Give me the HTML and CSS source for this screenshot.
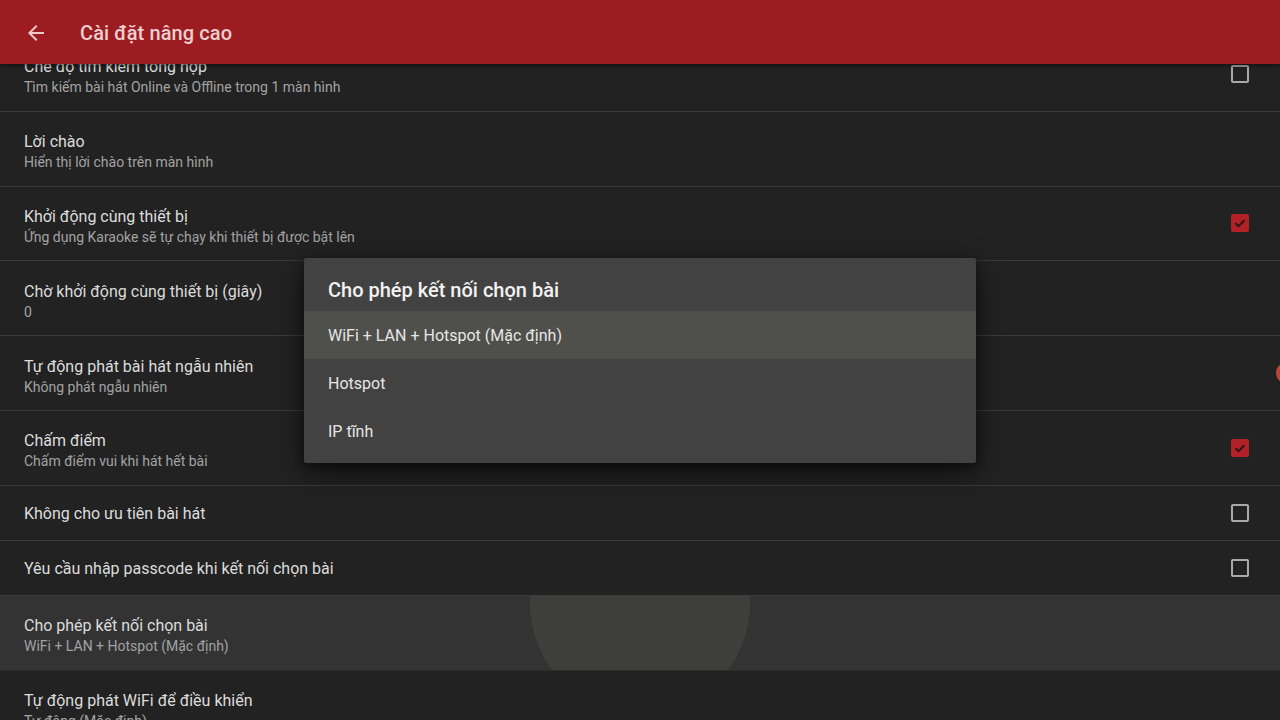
FILE: index.html
```html
<!DOCTYPE html>
<html lang="vi">
<head>
<meta charset="utf-8">
<title>Cài đặt nâng cao</title>
<link rel="stylesheet" href="styles.css">
</head>
<body>
<div class="screen">
  <header class="appbar">
    <svg class="back" viewBox="0 0 24 24" width="24" height="24"><path d="M20 11H7.83l5.59-5.59L12 4l-8 8 8 8 1.41-1.41L7.83 13H20v-2z" fill="currentColor"/></svg>
    <h1 class="appbar-title">Cài đặt nâng cao</h1>
  </header>
  <main class="content">
    <ul class="prefs">
      <li class="pref">
        <div class="pref-text"><div class="pref-title">Chế độ tìm kiếm tổng hợp</div><div class="pref-sub">Tìm kiếm bài hát Online và Offline trong 1 màn hình</div></div>
        <span class="cb"></span>
      </li>
      <li class="pref">
        <div class="pref-text"><div class="pref-title">Lời chào</div><div class="pref-sub">Hiển thị lời chào trên màn hình</div></div>
      </li>
      <li class="pref">
        <div class="pref-text"><div class="pref-title">Khởi động cùng thiết bị</div><div class="pref-sub">Ứng dụng Karaoke sẽ tự chạy khi thiết bị được bật lên</div></div>
        <span class="cb cb-on"><svg viewBox="0 0 18 18" width="18" height="18"><path d="M4.5 9.2l3 3 6-6" fill="none" stroke="#2a1618" stroke-width="2"/></svg></span>
      </li>
      <li class="pref">
        <div class="pref-text"><div class="pref-title">Chờ khởi động cùng thiết bị (giây)</div><div class="pref-sub">0</div></div>
      </li>
      <li class="pref">
        <div class="pref-text"><div class="pref-title">Tự động phát bài hát ngẫu nhiên</div><div class="pref-sub">Không phát ngẫu nhiên</div></div>
        <span class="thumb"></span>
      </li>
      <li class="pref">
        <div class="pref-text"><div class="pref-title">Chấm điểm</div><div class="pref-sub">Chấm điểm vui khi hát hết bài</div></div>
        <span class="cb cb-on"><svg viewBox="0 0 18 18" width="18" height="18"><path d="M4.5 9.2l3 3 6-6" fill="none" stroke="#2a1618" stroke-width="2"/></svg></span>
      </li>
      <li class="pref pref-single">
        <div class="pref-text"><div class="pref-title">Không cho ưu tiên bài hát</div></div>
        <span class="cb"></span>
      </li>
      <li class="pref pref-single">
        <div class="pref-text"><div class="pref-title">Yêu cầu nhập passcode khi kết nối chọn bài</div></div>
        <span class="cb"></span>
      </li>
      <li class="pref pref-focused">
        <span class="ripple"></span>
        <div class="pref-text"><div class="pref-title">Cho phép kết nối chọn bài</div><div class="pref-sub">WiFi + LAN + Hotspot (Mặc định)</div></div>
      </li>
      <li class="pref">
        <div class="pref-text"><div class="pref-title">Tự động phát WiFi để điều khiển</div><div class="pref-sub">Tự động (Mặc định)</div></div>
      </li>
    </ul>
  </main>
  <div class="dialog">
    <div class="dialog-title">Cho phép kết nối chọn bài</div>
    <ul class="options">
      <li class="option option-sel">WiFi + LAN + Hotspot (Mặc định)</li>
      <li class="option">Hotspot</li>
      <li class="option">IP tĩnh</li>
    </ul>
  </div>
</div>
</body>
</html>
```

FILE: styles.css
```css
* { box-sizing: border-box; }
html, body { margin: 0; padding: 0; }
body {
  background: #222222;
  font-family: Roboto, "Noto Sans", "Liberation Sans", sans-serif;
  width: 1280px;
  height: 720px;
  overflow: hidden;
}
.screen {
  position: relative;
  width: 1280px;
  height: 720px;
  display: flex;
  flex-direction: column;
  overflow: hidden;
}
.appbar {
  position: relative;
  z-index: 2;
  height: 64px;
  flex: none;
  background: #9d1c21;
  display: flex;
  align-items: center;
  padding-left: 24px;
  box-shadow: 0 2px 4px rgba(0,0,0,0.45);
  color: #ecc9ca;
}
.back { color: #ecc9ca; margin-top: 1px; }
.appbar-title {
  margin: 2px 0 0 32px;
  font-size: 20px;
  font-weight: 500;
  color: #ecd0d0;
  letter-spacing: 0.1px;
}
.content {
  flex: 1;
  overflow: hidden;
  position: relative;
  z-index: 1;
}
.prefs {
  list-style: none;
  margin: -27px 0 0 0;
  padding: 0;
}
.pref {
  position: relative;
  height: 74.8px;
  display: flex;
  align-items: center;
  padding: 7px 31px 0 24px;
  border-bottom: 1px solid #3a3a3a;
  overflow: hidden;
}
.pref-single { height: 55px; padding-top: 3px; }
.pref-focused { background: #333333; border-bottom-color: #2b2b2b; }
.pref-text { flex: 1; position: relative; z-index: 1; }
.pref-title {
  font-size: 16px;
  line-height: 20px;
  color: #dcdcdc;
}
.pref-sub {
  font-size: 14px;
  line-height: 20px;
  color: #a2a2a2;
}
.cb {
  width: 18px;
  height: 18px;
  margin-top: -7px;
  border: 2px solid #a9a9a9;
  border-radius: 2px;
  flex: none;
  display: flex;
  align-items: center;
  justify-content: center;
}
.pref-single .cb { margin-top: -3px; }
.cb-on {
  background: #b22128;
  border-color: #b22128;
}
.cb-on svg { flex: none; margin: -2px; }
.thumb {
  width: 22px;
  height: 22px;
  border-radius: 50%;
  background: #b4463a;
  margin-right: -49px;
  margin-top: -7px;
  flex: none;
  box-shadow: 0 1px 2px rgba(0,0,0,0.4);
}
.ripple {
  position: absolute;
  left: 530px;
  top: -102px;
  width: 220px;
  height: 220px;
  border-radius: 50%;
  background: #3e3e3a;
}
.dialog {
  position: absolute;
  z-index: 3;
  left: 304px;
  top: 258px;
  width: 672px;
  height: 205px;
  background: #424242;
  border-radius: 2px;
  box-shadow: 0 10px 30px rgba(0,0,0,0.55), 0 4px 10px rgba(0,0,0,0.4);
}
.dialog-title {
  height: 53px;
  padding: 20px 24px 0;
  font-size: 20px;
  line-height: 24px;
  font-weight: 500;
  color: #f2f2f2;
}
.options { list-style: none; margin: 0; padding: 0; }
.option {
  height: 48px;
  line-height: 48px;
  padding: 1px 24px 0;
  font-size: 16px;
  color: #e6e6e6;
}
.option-sel { background: #4f4f4c; }
```
